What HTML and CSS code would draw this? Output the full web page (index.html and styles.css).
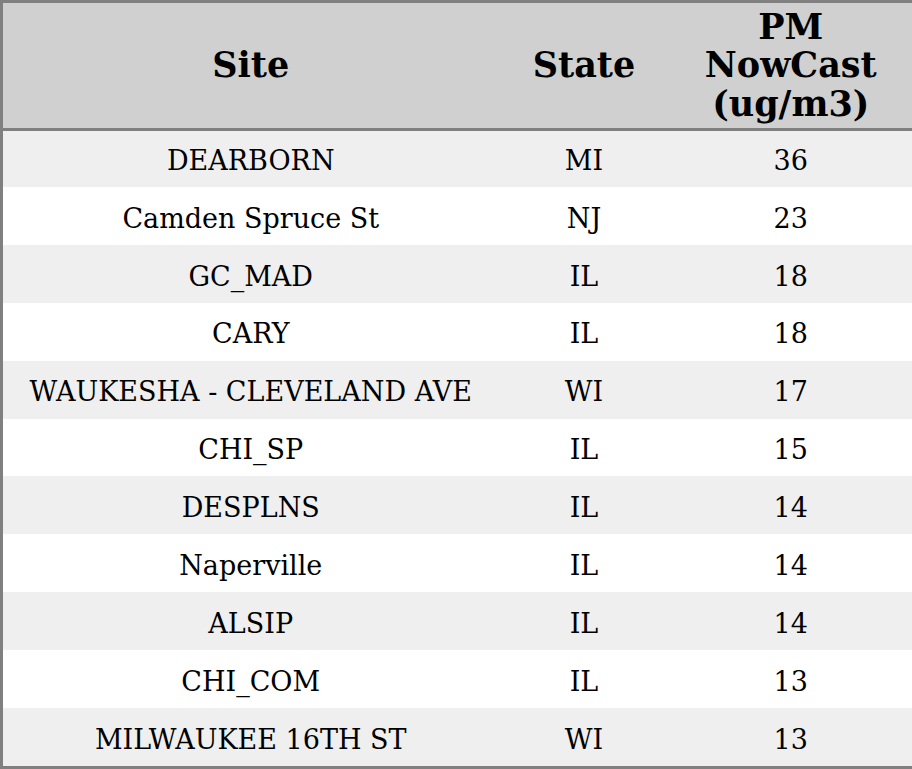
FILE: index.html
```html
<!DOCTYPE html>
<html>
<head>
<meta charset="utf-8">
<link rel="stylesheet" href="styles.css">
</head>
<body>
<table class="aq-table">
  <colgroup>
    <col class="col-site">
    <col class="col-state">
    <col class="col-pm">
  </colgroup>
  <thead>
    <tr><th>Site</th><th>State</th><th>PM<br>NowCast<br>(ug/m3)</th></tr>
  </thead>
  <tbody>
    <tr><td>DEARBORN</td><td>MI</td><td>36</td></tr>
    <tr><td>Camden Spruce St</td><td>NJ</td><td>23</td></tr>
    <tr><td>GC_MAD</td><td>IL</td><td>18</td></tr>
    <tr><td>CARY</td><td>IL</td><td>18</td></tr>
    <tr><td>WAUKESHA - CLEVELAND AVE</td><td>WI</td><td>17</td></tr>
    <tr><td>CHI_SP</td><td>IL</td><td>15</td></tr>
    <tr><td>DESPLNS</td><td>IL</td><td>14</td></tr>
    <tr><td>Naperville</td><td>IL</td><td>14</td></tr>
    <tr><td>ALSIP</td><td>IL</td><td>14</td></tr>
    <tr><td>CHI_COM</td><td>IL</td><td>13</td></tr>
    <tr><td>MILWAUKEE 16TH ST</td><td>WI</td><td>13</td></tr>
  </tbody>
</table>
</body>
</html>
```

FILE: styles.css
```css
html, body {
  margin: 0;
  padding: 0;
  background: #ffffff;
}

.aq-table {
  border-collapse: collapse;
  width: 912px;
  table-layout: fixed;
  border: 3px solid #808080;
  font-family: "DejaVu Serif", serif;
  color: #000;
}

.col-site { width: 497px; }
.col-state { width: 171px; }
.col-pm { width: 244px; }

.aq-table th {
  background: #d0d0d0;
  font-size: 35px;
  font-weight: bold;
  line-height: 38.4px;
  padding: 5px 0 4.8px;
  text-align: center;
  vertical-align: middle;
  border-bottom: 3px solid #808080;
}

.aq-table td {
  font-size: 27px;
  line-height: 31.4px;
  padding: 15.64px 0 10.86px;
  text-align: center;
  vertical-align: top;
}

.aq-table tbody tr:first-child td {
  padding-top: 13.94px;
  padding-bottom: 10.66px;
}

.aq-table tbody tr:nth-child(odd) td {
  background: #efefef;
}
```
